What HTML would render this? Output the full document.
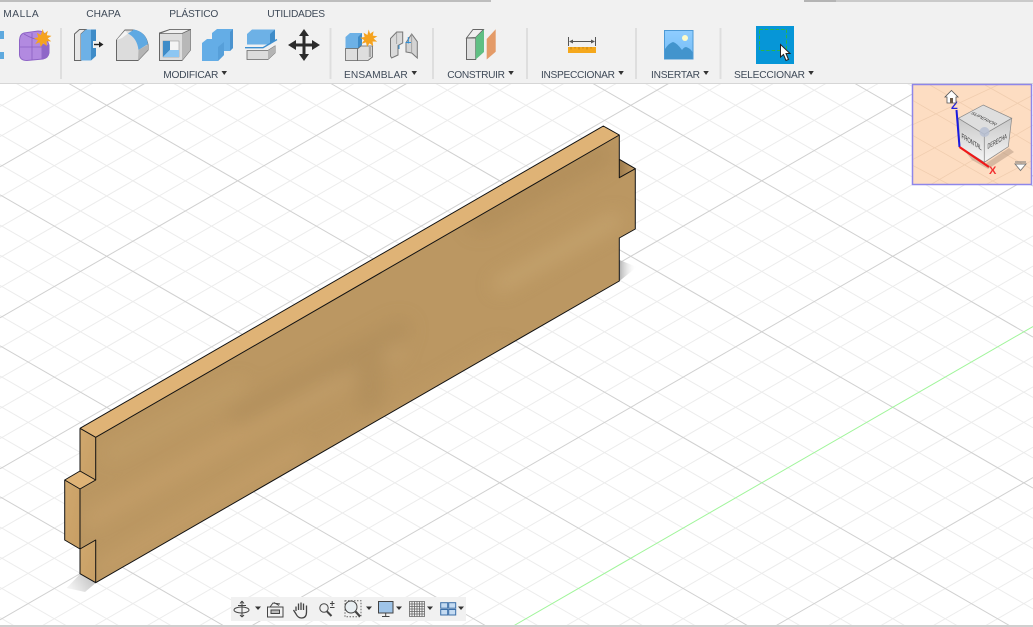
<!DOCTYPE html>
<html>
<head>
<meta charset="utf-8">
<style>
html,body{margin:0;padding:0;width:1033px;height:627px;overflow:hidden;background:#fff}
svg{position:absolute;left:0;top:0;display:block;overflow:hidden}
text{font-family:"Liberation Sans",sans-serif}
</style>
</head>
<body>
<svg width="1033" height="627" viewBox="0 0 1033 627" xmlns="http://www.w3.org/2000/svg">
<defs>
<filter id="b6" x="-20%" y="-40%" width="140%" height="180%"><feGaussianBlur stdDeviation="9"/></filter>
<clipPath id="front"><path d="M95.7 437.3L619.3 135V177.7L635.3 168.7V229L619.3 238V281L95.7 582.7V540L80 549V489L95.7 480Z"/></clipPath>
<clipPath id="nav"><rect x="913" y="85" width="119" height="99"/></clipPath>
<linearGradient id="side" x1="0" y1="0" x2="1" y2="1"><stop offset="0" stop-color="#d0a86e"/><stop offset="1" stop-color="#c79e64"/></linearGradient>
<linearGradient id="ts" x1="0" y1="0" x2="1" y2="0"><stop offset="0" stop-color="#9c7a4b"/><stop offset="1" stop-color="#c7a069"/></linearGradient>
<linearGradient id="sky" x1="0" y1="0" x2="0" y2="1"><stop offset="0" stop-color="#8fcdff"/><stop offset="1" stop-color="#74bcf5"/></linearGradient>
<linearGradient id="shr" x1="0" y1="0" x2="1" y2="0"><stop offset="0" stop-color="#b4b4b4"/><stop offset="1" stop-color="#fff" stop-opacity="0"/></linearGradient>
<linearGradient id="shl" x1="1" y1="0" x2="0" y2="0.4"><stop offset="0" stop-color="#bcbcbc"/><stop offset="1" stop-color="#f2f2f2"/></linearGradient>
<linearGradient id="cf" x1="0" y1="0" x2="0" y2="1"><stop offset="0" stop-color="#c8c8c8"/><stop offset="1" stop-color="#f6f6f6"/></linearGradient>
</defs>

<!-- grid minor -->
<path fill="none" stroke="#ececec" stroke-width="1" d="M0 106.4l1033-595.3M0 136.6l1033-595.3M0 197l1033-595.3M0 227.2l1033-595.3M0 257.4l1033-595.3M0 287.6l1033-595.3M0 348l1033-595.3M0 378.2l1033-595.3M0 408.4l1033-595.3M0 438.6l1033-595.3M0 499l1033-595.3M0 529.2l1033-595.3M0 559.4l1033-595.3M0 589.6l1033-595.3M39.9 627L1033 54.7M92.3 627L1033 84.9M144.7 627L1033 115.1M197.1 627L1033 145.3M301.9 627L1033 205.7M354.3 627L1033 235.9M406.7 627L1033 266.1M459.1 627L1033 296.3M563.9 627L1033 356.7M616.3 627L1033 386.9M668.7 627L1033 417.1M721.2 627L1033 447.3M826 627L1033 507.7M878.4 627L1033 537.9M930.8 627L1033 568.1M983.2 627L1033 598.3M0-499.8l1033 595.3M0-469.6l1033 595.3M0-439.4l1033 595.3M0-379l1033 595.3M0-348.8l1033 595.3M0-318.6l1033 595.3M0-288.4l1033 595.3M0-228l1033 595.3M0-197.8l1033 595.3M0-167.6l1033 595.3M0-137.4l1033 595.3M0-77l1033 595.3M0-46.8l1033 595.3M0-16.6l1033 595.3M0 13.6l1033 595.3M0 74L959.6 627M0 104.2L907.2 627M0 134.4L854.8 627M0 164.6L802.4 627M0 225L697.5 627M0 255.2L645.1 627M0 285.4L592.7 627M0 315.6L540.3 627M0 376L435.5 627M0 406.2L383.1 627M0 436.4L330.7 627M0 466.6L278.3 627M0 527L173.5 627M0 557.2L121.1 627M0 587.4L68.7 627M0 617.6L16.3 627"/>
<!-- grid major -->
<path fill="none" stroke="#d0d0d0" stroke-width="1" d="M0 166.8l1033-595.3M0 317.8l1033-595.3M0 468.8l1033-595.3M0 619.8l1033-595.3M249.5 627L1033 175.5M773.6 627L1033 477.5M0-409.2l1033 595.3M0-258.2l1033 595.3M0-107.2l1033 595.3M0 43.8L1012 627M0 194.8L750 627M0 345.8L487.9 627M0 496.8L225.9 627"/>
<path fill="none" stroke="#a0f59a" stroke-width="1" d="M511.5 627L1033 326.5"/>

<!-- shadows -->
<path d="M66.7 588L80 574L95.7 583L85 592Z" fill="url(#shl)"/>
<path d="M619.5 281V260L637 267Z" fill="url(#shr)"/>

<!-- board -->
<path d="M80 428.3L603.3 126L619.3 135L95.7 437.3Z" fill="#dfb376"/>
<path d="M80 428.3L95.7 437.3V480L80 471Z" fill="url(#side)"/>
<path d="M80 471L95.7 480L80 489L64.7 480Z" fill="#dfb376"/>
<path d="M64.7 480L80 489V549L64.7 540Z" fill="url(#side)"/>
<path d="M80 549L95.7 540V582.7L80 573.7Z" fill="url(#side)"/>
<path d="M619.3 159.3L635.3 168.7L619.3 177.7Z" fill="url(#ts)"/>
<path d="M95.7 437.3L619.3 135V177.7L635.3 168.7V229L619.3 238V281L95.7 582.7V540L80 549V489L95.7 480Z" fill="#bb9762"/>
<g clip-path="url(#front)">
<g filter="url(#b6)" fill="none" stroke-linecap="round" opacity=".75">
<path d="M90 520L330 385" stroke="#c6a06a" stroke-width="16"/>
<path d="M100 570L300 450" stroke="#c6a06a" stroke-width="14"/>
<path d="M240 415L400 330" stroke="#b08e5c" stroke-width="22"/>
<path d="M300 405L400 350" stroke="#c4a16e" stroke-width="10"/>
<path d="M370 350V400" stroke="#b08e5b" stroke-width="28"/>
<path d="M500 285L615 220" stroke="#c8a772" stroke-width="14"/>
<path d="M480 220L600 155" stroke="#b08d5a" stroke-width="26"/>
<path d="M330 455L500 355" stroke="#c09b66" stroke-width="20"/>
<path d="M110 455L240 385" stroke="#c2a06b" stroke-width="12"/>
</g>
</g>
<!-- board edges -->
<path fill="none" stroke="#111" stroke-width="1" stroke-linejoin="round" d="M95.7 437.3L619.3 135V177.7L635.3 168.7V229L619.3 238V281L95.7 582.7V540L80 549V489L95.7 480ZM80 428.3L603.3 126L619.3 135M80 428.3L95.7 437.3M80 428.3V471L95.7 480M80 471L64.7 480L80 489M64.7 480V540L80 549M80 549V573.7L95.7 582.7M619.3 159.3L635.3 168.7"/>

<!-- toolbar -->
<rect x="0" y="0" width="1033" height="83" fill="#f1f1f1"/>
<rect x="0" y="83" width="1033" height="1" fill="#d6d6d6"/>
<rect x="0" y="0" width="491" height="2" fill="#bdbdbd"/>
<rect x="804" y="0" width="32" height="2" fill="#b4b4b4"/>
<rect x="836" y="0" width="197" height="2" fill="#cacaca"/>
<g fill="#dedede">
<rect x="60" y="28" width="2" height="51"/><rect x="329.5" y="28" width="2" height="51"/><rect x="432" y="28" width="2" height="51"/><rect x="526" y="28" width="2" height="51"/><rect x="635" y="28" width="2" height="51"/><rect x="719.5" y="28" width="2" height="51"/>
</g>

<g font-size="10.2" fill="#3f4a58">
<text x="3.3" y="17" textLength="35.4">MALLA</text>
<text x="86.3" y="17" textLength="34.4">CHAPA</text>
<text x="169.3" y="17" textLength="49">PLÁSTICO</text>
<text x="267.3" y="17" textLength="57.7">UTILIDADES</text>
<text x="163.3" y="78" textLength="55">MODIFICAR</text>
<text x="344" y="78" textLength="63.7">ENSAMBLAR</text>
<text x="447.3" y="78" textLength="57.7">CONSTRUIR</text>
<text x="541" y="78" textLength="74">INSPECCIONAR</text>
<text x="651" y="78" textLength="49">INSERTAR</text>
<text x="734" y="78" textLength="71">SELECCIONAR</text>
</g>
<g fill="#333">
<path d="M221.5 71h5.5l-2.750 4zM411.5 71h5.5l-2.750 4zM508.3 71h5.5l-2.750 4zM618.3 71h5.5l-2.750 4zM703.3 71h5.5l-2.750 4zM808.3 71h5.5l-2.750 4z"/>
</g>

<!-- left clipped icon -->
<rect x="0" y="31" width="4" height="8" fill="#5ea9de"/>
<rect x="0" y="52" width="4" height="7" fill="#5ea9de"/>

<!-- purple form icon -->
<path d="M19.5 40Q20 34 24 33L38 31Q44 31 45 35L49 45V53Q48 58 43 59L27 60.5Q20 60.5 19.5 55Z" fill="#b28ae0" stroke="#8e63c6" stroke-width="1"/>
<path d="M20 47H42M32 33V60M24 34Q34 40 42 40V59" fill="none" stroke="#8a5fc2" stroke-width=".8"/>
<path d="M42.5 44L49 45V53Q48 58 42.5 59Z" fill="#8f66c8"/>
<path d="M42.7 29l1.5 4.700 3.600-3-1 4.600 4.700.6-3.800 2.500 3.500 3-4.700-.1.400 4.800-3.600-3-2.600 4-1-4.700-4.500 1.700 2.700-3.900-4.300-2 4.700-1-1.500-4.500 4.100 2.300z" fill="#f5a31f"/>

<!-- press pull -->
<path d="M74.5 60.5V34L79.5 29.5H86L81 34V60.5Z" fill="#e8e8e8" stroke="#666" stroke-width="1"/>
<path d="M81 34L86 29.5H91V60.5H81Z" fill="#6db1e6"/>
<path d="M91 29.5H96V41H93V48H96V56L91 60.5Z" fill="#3f8cc8"/>
<path d="M94 44.5H100" stroke="#222" stroke-width="1.4"/><path d="M99 41.5L103.5 44.5L99 47.5Z" fill="#222"/>

<!-- fillet -->
<path d="M116.5 60.5V40L125 30H133Q146 32 148 45V50L138 60.5Z" fill="#dcdcdc" stroke="#666" stroke-width="1"/>
<path d="M128 33.5L134 29.5Q146 32 148 44L138.5 50Q137 38 128 33.5Z" fill="#5fa9e2"/>
<path d="M138.5 50L148 44.5V50L138 60.5Z" fill="#b4b4b4"/>
<path d="M116.5 40L125 30.5L128 33.5L122 38Z" fill="#f4f4f4"/>

<!-- shell -->
<path d="M159.5 60.5V33L170 29.5H190.5V50L182 60.5Z" fill="#dedede" stroke="#666" stroke-width="1"/>
<path d="M182 33.5L190.5 29.5V50L182 60.5Z" fill="#b8b8b8"/>
<path d="M159.5 33.5H182L190.5 29.5H170Z" fill="#f0f0f0" stroke="#666" stroke-width=".7"/>
<rect x="163" y="41" width="16" height="16" fill="#f4f4f4" stroke="#888" stroke-width=".5"/>
<path d="M163 41H170V50L163 57Z" fill="#3f8cc8"/>
<path d="M163 57L170 50H179V57Z" fill="#8cc6f2"/>

<!-- combine -->
<path d="M202 61V43L207 39H212V33L217 29H233V48L230 51H224V55L218 61Z" fill="#64ade6"/>
<path d="M230 32L233 29V48L230 51Z" fill="#4b93cf"/>
<path d="M218 47L224 42V55L218 61Z" fill="#569fd9"/>

<!-- split -->
<path d="M247 34L252 29.5H275V40L270 44.5H247Z" fill="#6db1e6"/>
<path d="M270 34L275 29.5V40L270 44.5Z" fill="#3f8cc8"/>
<path d="M245 47.7H263L277 39.5" fill="none" stroke="#3d8fd0" stroke-width="1.4"/>
<path d="M247 50.5H268L275 46V53L268 59.5H247Z" fill="#dcdcdc" stroke="#666" stroke-width=".8"/>
<path d="M268 50.5L275 46V53L268 59.5Z" fill="#b4b4b4"/>

<!-- move -->
<path d="M304 29L309 36H305.5V43.5H312V40L320 45L312 50V46.5H305.5V54H309L304 61L299 54H302.5V46.5H296V50L288 45L296 40V43.5H302.5V36H299Z" fill="#2b2b2b"/>

<!-- assemble -->
<path d="M345.5 37L350 33H362V45L358 48.5H345.5Z" fill="#6db1e6"/>
<path d="M358 37L362 33V45L358 48.5Z" fill="#3f8cc8"/>
<rect x="345.5" y="48.5" width="12" height="12" fill="#dedede" stroke="#666" stroke-width=".8"/>
<path d="M357.5 60.5V49L361 46H372.5V57L368 60.5Z" fill="#dedede" stroke="#666" stroke-width=".8"/>
<path d="M370 47V57" stroke="#aaa" stroke-width="2.4"/>
<path d="M368.7 29.5l1.400 4.300 3.500-2.500-.8 4.300 4.600.6-3.800 2.400 3.600 3-4.600-.1.600 4.600-3.700-2.800-2.500 3.600-1-4.500-4.400 1.400 2.600-3.700-4.200-2.400 4.600-.7-1-4.300 3.800 2.300z" fill="#f5a31f"/>

<!-- joint -->
<path d="M390.5 38.5L396.7 32H402.7V43L398 45.5V55L391.6 58L390.5 56Z" fill="#dadada" stroke="#777" stroke-width="1"/>
<path d="M396.7 32.5V44" stroke="#999" stroke-width=".8"/>
<path d="M406 42.7L411.7 34L417.3 41.7V58L411.7 53L406 52Z" fill="#d4d4d4" stroke="#777" stroke-width="1"/>
<path d="M411.7 34V53" stroke="#999" stroke-width=".8"/>
<path d="M408.3 37V43.5M399 45V49" stroke="#2f8fd6" stroke-width="1"/>
<path d="M405.5 42.5H411" stroke="#2f8fd6" stroke-width="1"/>

<!-- construct -->
<path d="M466.5 38L473 29.5H483.5L475.7 37.5Z" fill="#efefef" stroke="#666" stroke-width=".9"/>
<path d="M466.5 38H475.7V59.5H466.5Z" fill="#dedede" stroke="#666" stroke-width="1"/>
<path d="M475.7 37.5L484 29.5V52L475.7 59.5Z" fill="#5fbf83"/>
<path d="M486.7 39L495.7 29.3V51.7L486.7 59.5Z" fill="#e49b68"/>

<!-- inspect -->
<path d="M568.5 37V46M595.5 37V46M570 41.5H594" stroke="#555" stroke-width="1" fill="none"/>
<path d="M569 41.5L573 39.5V43.5ZM595 41.5L591 39.5V43.5Z" fill="#555"/>
<rect x="568" y="47" width="28" height="6" fill="#f5a81c"/>
<path d="M571 47v2.500M575 47v1.500M579 47v2.500M583 47v1.500M587 47v2.500M591 47v1.500" stroke="#b87a10" stroke-width=".8"/>

<!-- insert -->
<rect x="664.5" y="30.5" width="28.5" height="28.5" fill="url(#sky)" stroke="#4d9ad6" stroke-width="1"/>
<circle cx="685" cy="38" r="3" fill="#fdfbc9"/>
<path d="M665 59V49Q669 43 673 42Q677 43 682 50Q684 47 686 47Q690 48 692.5 52V59Z" fill="#4294cd"/>

<!-- select -->
<rect x="756" y="26" width="38" height="38" fill="#0696d7"/>
<rect x="759.5" y="29.5" width="27" height="21" fill="none" stroke="#2ab54a" stroke-width="1" stroke-dasharray="3.4 2"/>
<path d="M780.5 44.5V57L783.5 54.5L786 60.5L788.5 59.5L786 53.5H790Z" fill="#fff" stroke="#222" stroke-width="1"/>

<!-- nav cube box -->
<rect x="912.5" y="84.5" width="119" height="100" fill="#fdddc2"/>
<g clip-path="url(#nav)">
<path fill="none" stroke="#f0cdaf" stroke-width=".8" d="M912 125L1000 84M912 160L1033 95M930 185L1033 125M985 185L1033 160M912 100L1033 170M930 85L1033 145M985 85L1033 112M912 135L1000 185M912 165L950 185"/>
</g>
<path d="M964 150L985 164L1009 148L1014 152L988 169L972 160Z" fill="#a88f7a" opacity=".45"/>
<rect x="912.5" y="84.5" width="119" height="100" fill="none" stroke="#8e86ea" stroke-width="1.5"/>
<!-- cube -->
<path d="M958.3 118.3L983.3 105L1011.7 118.3L984.3 134.3Z" fill="#dedede" stroke="#888" stroke-width=".7"/>
<path d="M958.3 118.3L984.3 134.3V162.3L960 147Z" fill="url(#cf)" stroke="#888" stroke-width=".7"/>
<path d="M984.3 134.3L1011.7 118.3L1008.3 146.7L984.3 162.3Z" fill="url(#cf)" stroke="#888" stroke-width=".7"/>
<circle cx="984.5" cy="132" r="5" fill="#b7c0d2" opacity=".85"/>
<text font-size="6" fill="#333" transform="matrix(.8 .39 -.75 .42 970 113.5)">SUPERIOR</text>
<text font-size="6.5" fill="#333" transform="matrix(.68 .42 0 1.1 961.5 138)">FRONTAL</text>
<text font-size="6.5" fill="#333" transform="matrix(.61 -.34 0 1.1 987.5 149)">DERECHA</text>
<path d="M959.5 147L956.5 110" stroke="#1a1ae0" stroke-width="2" fill="none"/>
<path d="M959.5 147L989 167" stroke="#f01818" stroke-width="2.2" fill="none"/>
<text x="951" y="109" font-size="11" font-weight="bold" fill="#2222e0">Z</text>
<text x="989" y="174" font-size="11" font-weight="bold" fill="#f23030">X</text>
<!-- home -->
<path d="M951.5 90.5L958 97H956V103H947V97H945Z" fill="#fff" stroke="#555" stroke-width=".8"/>
<rect x="950" y="98" width="3" height="5" fill="#6a5a48"/>
<!-- dropdown -->
<path d="M1015 164H1026L1020.5 170.5Z M1015 162H1026" fill="#fff" stroke="#777" stroke-width=".9"/>

<!-- bottom bar -->
<rect x="231" y="597" width="235" height="24" fill="#f1f1f1"/>
<rect x="0" y="625" width="1033" height="2" fill="#cfcfcf"/>
<g fill="none" stroke="#444" stroke-width="1">
<!-- orbit -->
<path d="M242 601V617M242 601l-2 2.500M242 601l2 2.500M242 617l-2-2M242 617l2-2M238 605.5H246"/>
<ellipse cx="241.5" cy="610" rx="7.5" ry="3"/>
<!-- look at -->
<rect x="267.5" y="607" width="15.5" height="10" fill="#f1f1f1"/>
<rect x="271" y="610" width="8.5" height="3.5" fill="#bbb"/>
<path d="M270 607L273 603L280 604M274 602.5L279 605.5"/>
<!-- hand -->
<path d="M296 606.5V611M298.5 603.5V610M301 602.5V610M303.5 603.5V610M306.5 605.5V612Q306.5 618 301.5 618Q298 618 296 614L293.5 610" stroke-width="1.3"/>
<!-- zoom +- -->
<circle cx="324" cy="608" r="4.2"/>
<path d="M327 611.5L331.5 616" stroke-width="2"/>
<path d="M330 603.5H334.5M332.2 601V606M330 607.5H334.5"/>
<!-- fit -->
<rect x="345" y="600.7" width="16" height="16" stroke-dasharray="1.5 1.5" stroke="#666"/>
<circle cx="351" cy="607" r="6" fill="#e8eef2"/>
<path d="M355.5 611.5L360 616.5" stroke-width="2.2"/>
<!-- display -->
<rect x="378.5" y="601.5" width="14.5" height="11.5" fill="#9fc4e8"/>
<path d="M382 616.5H389.5M385.7 613V616.5"/>
<!-- grid -->
<path d="M409.5 601.5h15v15h-15zM412 601.5v15M414.5 601.5v15M417 601.5v15M419.5 601.5v15M422 601.5v15M409.5 604h15M409.5 606.5h15M409.5 609h15M409.5 611.5h15M409.5 614h15" stroke="#666" stroke-width=".8"/>
<!-- views -->
<g stroke="#3a6ea8" fill="#c4dbf2"><rect x="440.7" y="602.7" width="7" height="5.5"/><rect x="448.7" y="602.7" width="7" height="5.5"/><rect x="440.7" y="609.5" width="7" height="5.5"/><rect x="448.7" y="609.5" width="7" height="5.5"/></g>
</g>
<g fill="#333">
<path d="M255 606.5h6l-3 3.500zM366 606.5h6l-3 3.500zM396 606.5h6l-3 3.500zM427 606.5h6l-3 3.500zM458 606.5h6l-3 3.500z"/>
</g>
</svg>
</body>
</html>
